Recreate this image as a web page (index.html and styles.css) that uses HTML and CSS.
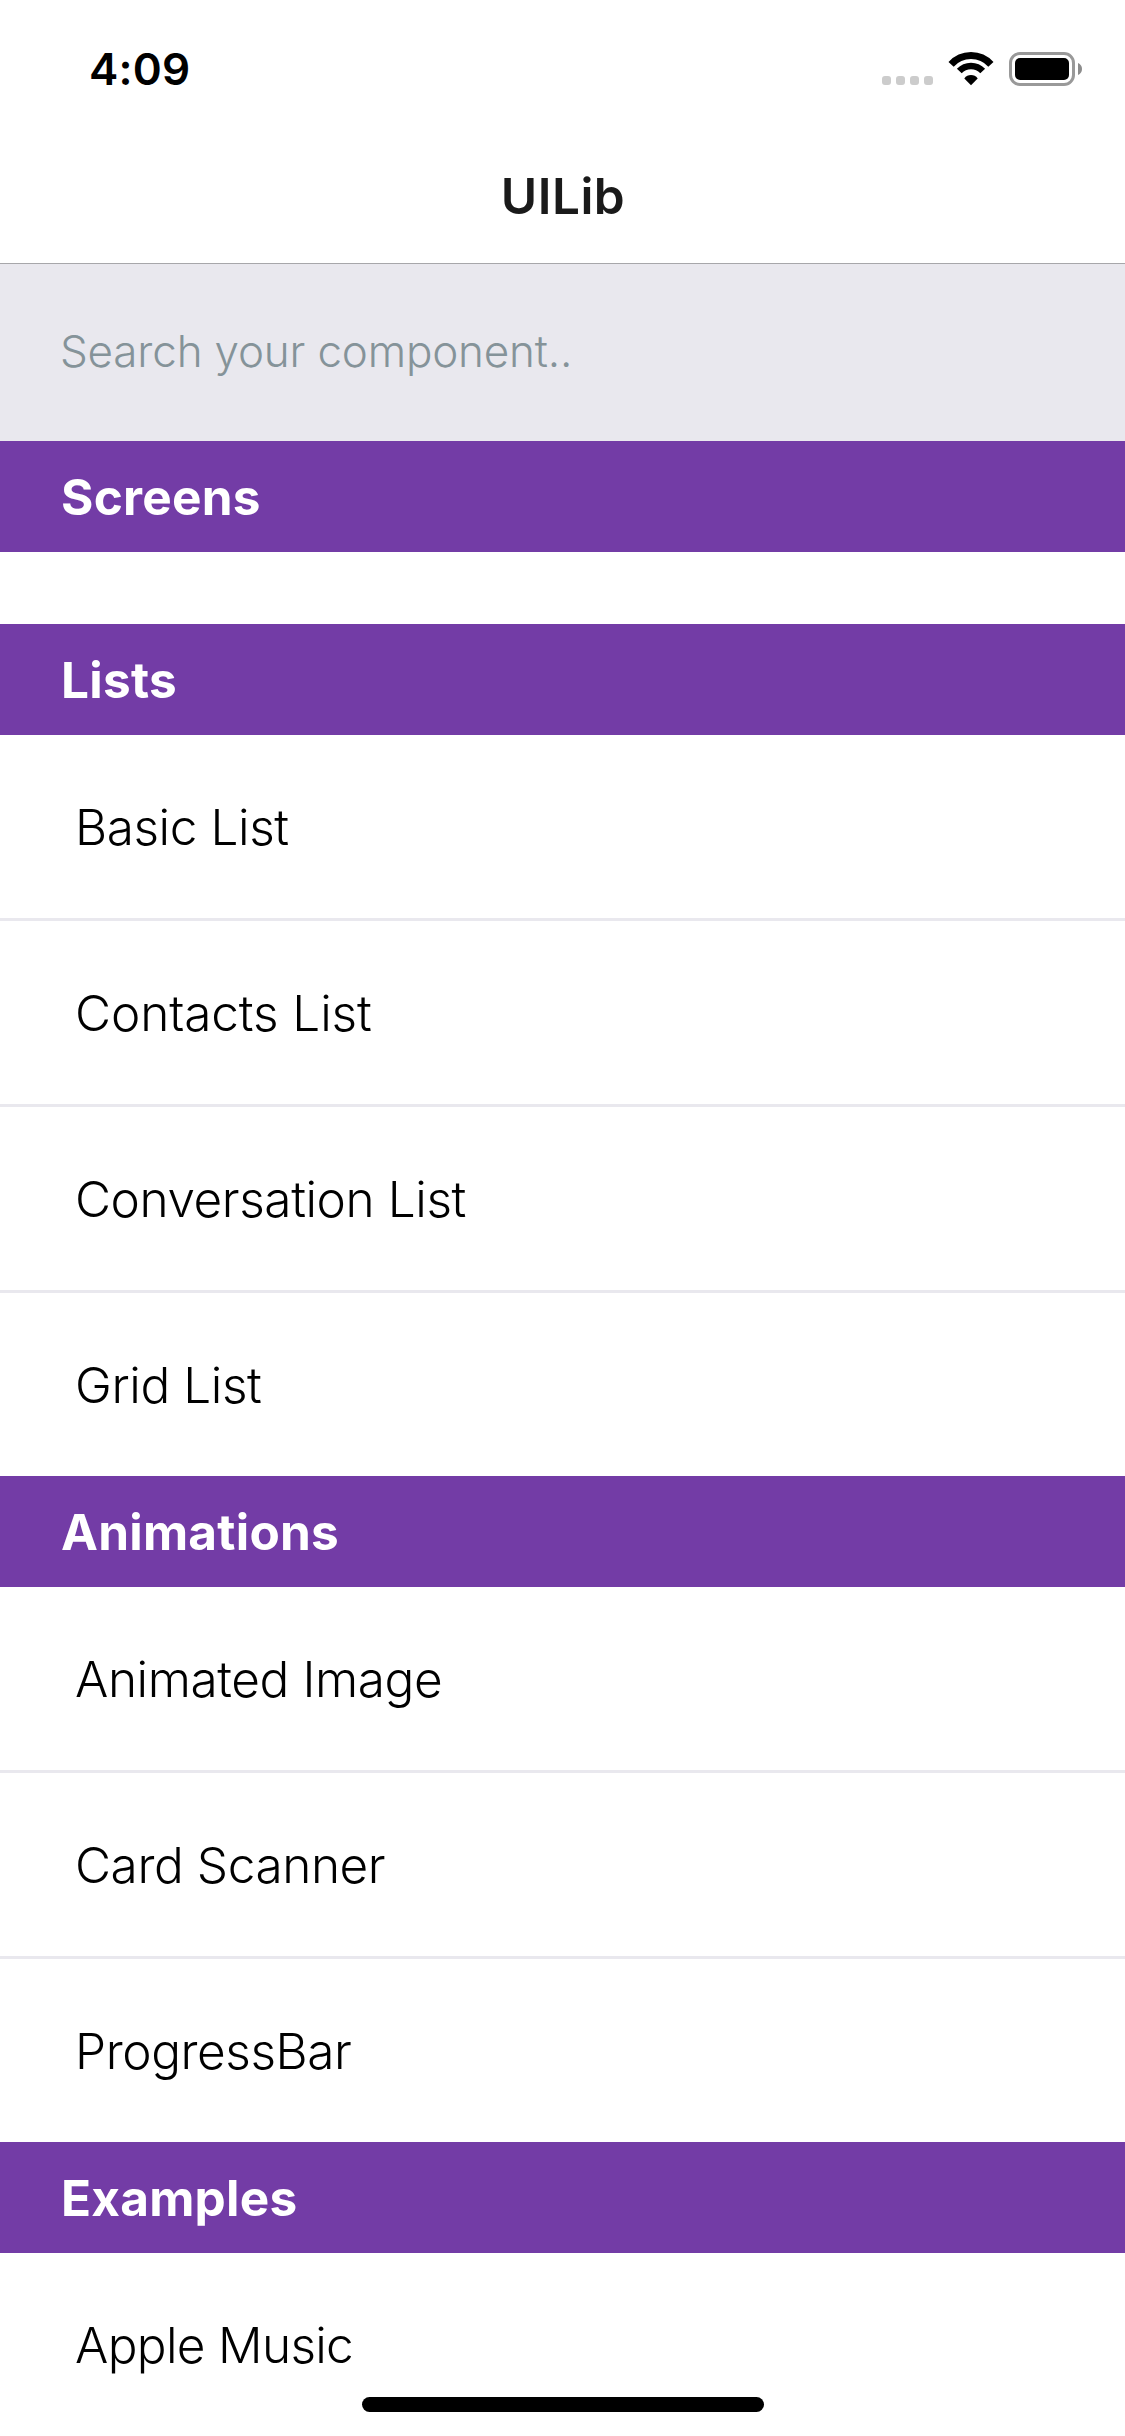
FILE: index.html
```
<!DOCTYPE html>
<html lang="en">
<head>
<meta charset="utf-8">
<title>UILib</title>
<link rel="stylesheet" href="styles.css">
</head>
<body>
<div class="screen">
  <div class="status-bar">
    <span class="time">4:09</span>
    <div class="indicators">
      <div class="signal"><i></i><i></i><i></i><i></i></div>
      <svg class="wifi" width="46" height="34" viewBox="0 0 46 34">
        <path d="M3.1 12.4A26.8 26.8 0 0 1 42.9 12.4" fill="none" stroke="#000" stroke-width="7"/>
        <path d="M11.3 19.1A16.1 16.1 0 0 1 34.7 19.1" fill="none" stroke="#000" stroke-width="6.6"/>
        <path d="M23 33.2L16.3 26.4Q19 23.1 23 23.1T29.7 26.4Z"/>
      </svg>
      <svg class="battery" width="74" height="34" viewBox="0 0 74 34">
        <rect x="1.5" y="1.5" width="63" height="31" rx="9.5" fill="none" stroke="#999" stroke-width="3"/>
        <rect x="6" y="6" width="54" height="22" rx="5"/>
        <path d="M69 11Q73 12.8 73 17T69 23Z" fill="#8c8c8c"/>
      </svg>
    </div>
  </div>
  <header class="nav-bar"><h1 class="nav-title">UILib</h1></header>
  <div class="search"><input class="search-input" type="text" placeholder="Search your component.."></div>

  <section class="section section-empty">
    <h2 class="section-title">Screens</h2>
  </section>
  <section class="section">
    <h2 class="section-title">Lists</h2>
    <ul class="rows">
      <li class="row">Basic List</li>
      <li class="row row-loose">Contacts List</li>
      <li class="row">Conversation List</li>
      <li class="row">Grid List</li>
    </ul>
  </section>
  <section class="section">
    <h2 class="section-title">Animations</h2>
    <ul class="rows">
      <li class="row">Animated Image</li>
      <li class="row">Card Scanner</li>
      <li class="row">ProgressBar</li>
    </ul>
  </section>
  <section class="section">
    <h2 class="section-title">Examples</h2>
    <ul class="rows">
      <li class="row row-tight">Apple Music</li>
    </ul>
  </section>
  <div class="home-indicator"></div>
</div>
</body>
</html>
```
FILE: styles.css
```
* {
  box-sizing: border-box;
}

body {
  margin: 0;
  background: #fff;
  font-family: Inter, "Liberation Sans", sans-serif;
}

.screen {
  position: relative;
  display: flex;
  flex-direction: column;
  width: 1125px;
  height: 2436px;
  overflow: hidden;
}

.status-bar {
  display: flex;
  flex: none;
  justify-content: space-between;
  height: 132px;
  padding: 52px 42px 0 89px;
}

.time {
  height: 34px;
  color: #000;
  font-size: 44px;
  font-weight: 600;
  line-height: 34px;
  letter-spacing: 0.2px;
}

.indicators {
  display: flex;
  height: 34px;
}

.signal {
  display: flex;
  gap: 5px;
  align-items: flex-end;
  margin-right: 15px;
  padding-bottom: 1px;
}

.signal i {
  width: 9px;
  height: 9px;
  border-radius: 3px;
  background: #ccc;
}

.wifi {
  margin-right: 15px;
}

.nav-bar {
  display: flex;
  flex: none;
  align-items: center;
  justify-content: center;
  height: 132px;
  padding: 0 0 3px 1px;
  border-bottom: 1px solid #a7a7aa;
}

.nav-title {
  margin: 0;
  color: #1a1a1a;
  font-size: 49.5px;
  font-weight: 600;
  line-height: 60px;
  letter-spacing: 0.5px;
}

.search {
  flex: none;
  height: 177px;
  padding: 0 60px 4px;
  background: #e9e8ee;
}

.search-input {
  width: 100%;
  height: 100%;
  padding: 0;
  border: 0;
  outline: 0;
  background: transparent;
  font-family: inherit;
  font-size: 44px;
  font-weight: 300;
  letter-spacing: -0.19px;
}

.search-input::placeholder {
  color: #859399;
  opacity: 1;
}

.section {
  flex: none;
}

.section-empty {
  padding-bottom: 72px;
}

.section-title {
  height: 111px;
  margin: 0;
  padding-left: 61px;
  background: #733ca6;
  color: #fff;
  font-size: 49.5px;
  font-weight: 700;
  line-height: 112px;
  letter-spacing: 0.25px;
}

.rows {
  margin: 0;
  padding: 0;
  list-style: none;
}

.row {
  padding: 2px 0 0 75px;
  border-bottom: 3px solid #e9e8ee;
  color: #000;
  font-size: 49.5px;
  font-weight: 300;
  line-height: 181px;
  letter-spacing: -0.42px;
}

.row:last-child {
  border-bottom: 0;
}

.row-loose {
  letter-spacing: -0.1px;
}

.row-tight {
  letter-spacing: -0.68px;
}

.home-indicator {
  position: absolute;
  bottom: 24px;
  left: 362px;
  width: 402px;
  height: 15px;
  border-radius: 7.5px;
  background: #000;
}
```
